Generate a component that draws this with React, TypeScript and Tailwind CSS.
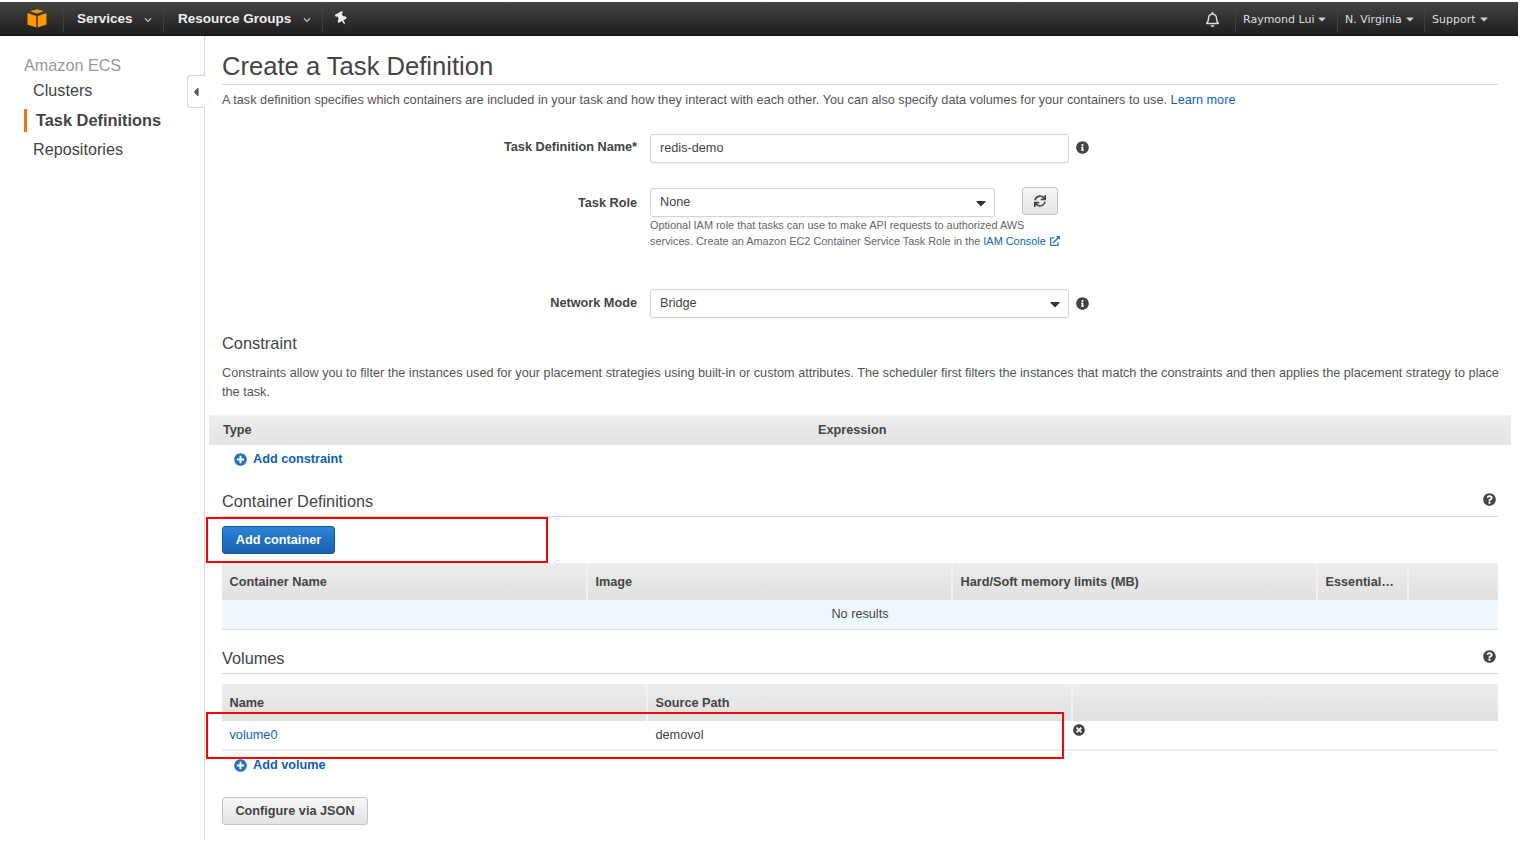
import React from "react";
import { FaInfoCircle, FaQuestionCircle, FaTimesCircle, FaPlusCircle, FaSync, FaThumbtack, FaRegBell, FaExternalLinkAlt, FaCaretDown, FaCaretLeft, FaChevronDown } from "react-icons/fa";

function Logo() {
  return (
    <svg width="20" height="19" viewBox="0 0 20 19" className="block">
      <path d="M0.5 4 L9.3 7 V18.5 L0.5 15.5 Z" fill="#f90" />
      <path d="M19.5 4 L10.7 7 V18.5 L19.5 15.5 Z" fill="#f90" />
      <path d="M3 2.2 L10 0.2 L17 2.2 L10 4.6 Z" fill="#f90" />
    </svg>
  );
}

function NavSep() {
  return <div className="w-px h-[26px] bg-[#3f3f3f]" />;
}

function TopNav() {
  return (
    <div className="mt-[2px] h-[34px] w-[1518px] flex items-center bg-gradient-to-b from-[#444444] to-[#1e1e1e] border-b border-[#141414] text-white">
      <div className="ml-[27px] w-[36px]"><Logo /></div>
      <NavSep />
      <div className="w-[13px]" />
      <span className="mt-[1px] text-[13.5px] font-bold text-[#eeeeee] w-[67px]">Services</span>
      <FaChevronDown className="mt-[2px] w-[8px] h-[8px] text-[#bbbbbb]" />
      <div className="w-[11px]" />
      <NavSep />
      <div className="w-[14px]" />
      <span className="mt-[1px] text-[13.5px] font-bold text-[#eeeeee] w-[125px] whitespace-nowrap">Resource Groups</span>
      <FaChevronDown className="mt-[2px] w-[8px] h-[8px] text-[#bbbbbb]" />
      <div className="w-[11px]" />
      <NavSep />
      <FaThumbtack className="ml-[12px] w-[13px] h-[13px] text-[#eeeeee] -rotate-30" />
      <div className="flex-1" />
      <FaRegBell className="mt-[1px] w-[15px] h-[15px] text-[#dddddd]" />
      <div className="w-[15px]" />
      <NavSep />
      <span className="ml-[7px] mt-[3px] font-['DejaVu_Sans'] text-[11px] text-[#dddddd] whitespace-nowrap w-[73px]">Raymond Lui</span>
      <FaCaretDown className="w-[12px] h-[12px] text-[#cccccc]" />
      <div className="w-[9px]" />
      <NavSep />
      <span className="ml-[7px] mt-[3px] font-['DejaVu_Sans'] text-[11px] text-[#dddddd] whitespace-nowrap w-[59px]">N. Virginia</span>
      <FaCaretDown className="w-[12px] h-[12px] text-[#cccccc]" />
      <div className="w-[8px]" />
      <NavSep />
      <span className="ml-[7px] mt-[3px] font-['DejaVu_Sans'] text-[11px] text-[#dddddd] whitespace-nowrap w-[46px]">Support</span>
      <FaCaretDown className="w-[12px] h-[12px] text-[#cccccc]" />
      <div className="w-[28px]" />
    </div>
  );
}

function Sidebar() {
  return (
    <div className="relative w-[205px] h-[804px] shrink-0 border-r border-[#d5d5d5] pt-[19px]">
      <div className="pl-[24px] text-[16.2px] leading-[20px] text-[#999999]">Amazon ECS</div>
      <div className="pl-[33px] mt-[5px] text-[16.2px] leading-[20px] text-[#444444]">Clusters</div>
      <div className="ml-[24px] mt-[9px] h-[23px] border-l-[3px] border-[#e47911] pl-[9px] text-[16.35px] leading-[23px] font-bold text-[#444444]">Task Definitions</div>
      <div className="pl-[33px] mt-[7px] text-[16.2px] leading-[20px] text-[#444444]">Repositories</div>
      <div className="absolute right-[-1px] top-[39px] w-[18px] h-[33px] bg-white border border-r-0 border-[#d5d5d5] rounded-l-[4px] flex items-center justify-center pr-[2px]">
        <FaCaretLeft className="w-[14px] h-[14px] text-[#555555]" />
      </div>
    </div>
  );
}

function Label({ children }: { children: React.ReactNode }) {
  return <div className="w-[415px] text-right text-[12.7px] font-bold text-[#444444] whitespace-nowrap">{children}</div>;
}

function Field({ width, text, caret }: { width: string; text: string; caret?: boolean }) {
  return (
    <div className={`${width} h-[29px] bg-white border border-[#d5d5d5] rounded-[3px] flex items-center justify-between pl-[9px] pr-[5px] text-[12.7px] text-[#444444] shadow-[0_1px_1px_rgba(0,0,0,0.05)]`}>
      <span className="mt-[1px]">{text}</span>
      {caret && <FaCaretDown className="w-[16px] h-[16px] text-[#333333]" />}
    </div>
  );
}

function Info() {
  return <FaInfoCircle className="w-[13px] h-[13px] text-[#444444]" />;
}

function HeaderCell({ children, className }: { children?: React.ReactNode; className: string }) {
  return <div className={`${className} h-full flex items-center pt-[1px] px-[7.5px] border-r-2 border-[#f2f2f2] text-[12.7px] font-bold text-[#444444] whitespace-nowrap`}>{children}</div>;
}

function SectionHead({ title }: { title: string }) {
  return (
    <div className="h-[27px] flex items-center justify-between border-b border-[#d5d5d5] text-[#444444]">
      <span className="text-[16.3px] leading-[20px] -mt-[4px]">{title}</span>
      <FaQuestionCircle className="mr-[2px] w-[13px] h-[13px] text-[#444444] -mt-[8px]" />
    </div>
  );
}

function AddLink({ children, className }: { children: React.ReactNode; className: string }) {
  return (
    <div className={`${className} ml-[12px] flex items-center gap-[6px] text-[12.7px] font-bold text-[#0f5fb5]`}>
      <FaPlusCircle className="w-[13px] h-[13px] text-[#2272c3]" />
      <span>{children}</span>
    </div>
  );
}

export default function App() {
  return (
    <div className="relative w-[1520px] h-[844px] overflow-hidden bg-white font-['Liberation_Sans',Arial,sans-serif]">
      <TopNav />
      <div className="flex">
        <Sidebar />
        <div className="flex-1 min-w-0 pl-[17px] pr-[22px]">
          <h1 className="mt-[15px] h-[34px] border-b border-[#d5d5d5] text-[25.6px] leading-[30px] text-[#444444] font-normal">Create a Task Definition</h1>
          <p className="mt-[7px] text-[12.7px] leading-[16px] text-[#555555] whitespace-nowrap">
            A task definition specifies which containers are included in your task and how they interact with each other. You can also specify data volumes for your containers to use. <span className="text-[#0f63b5]">Learn more</span>
          </p>

          <div className="mt-[26px] flex items-center gap-[13px]">
            <div className="-mt-[2px]"><Label>Task Definition Name*</Label></div>
            <Field width="w-[419px]" text="redis-demo" />
            <div className="-ml-[6px] -mt-[2px]"><Info /></div>
          </div>

          <div className="mt-[25px] flex items-start gap-[13px]">
            <div className="mt-[6px]"><Label>Task Role</Label></div>
            <div className="w-[420px]">
              <div className="flex items-start">
                <Field width="w-[345px]" text="None" caret />
                <div className="ml-[27px] -mt-[1px] w-[36px] h-[28px] rounded-[3px] border border-[#c4c4c4] bg-gradient-to-b from-[#f7f7f7] to-[#e4e4e4] flex items-center justify-center">
                  <FaSync className="w-[12px] h-[12px] text-[#444444]" />
                </div>
              </div>
              <p className="text-[10.9px] leading-[16px] text-[#666666] whitespace-nowrap">
                Optional IAM role that tasks can use to make API requests to authorized AWS<br />
                services. Create an Amazon EC2 Container Service Task Role in the <span className="text-[#0f63b5]">IAM Console</span>
                <FaExternalLinkAlt className="inline w-[10px] h-[10px] ml-[4px] text-[#2272c3] align-[-1px]" />
              </p>
            </div>
          </div>

          <div className="mt-[40px] flex items-center gap-[13px]">
            <div className="mt-[1px]"><Label>Network Mode</Label></div>
            <Field width="w-[419px]" text="Bridge" caret />
            <div className="-ml-[6px]"><Info /></div>
          </div>

          <h2 className="mt-[15px] text-[16.4px] leading-[20px] text-[#444444] font-normal">Constraint</h2>
          <p className="mt-[11px] -mr-[6px] text-[12.7px] leading-[19px] text-[#555555]">
            Constraints allow you to filter the instances used for your placement strategies using built-in or custom attributes. The scheduler first filters the instances that match the constraints and then applies the placement strategy to place the task.
          </p>

          <div className="mt-[13px] -mx-[13px] h-[30px] flex items-center bg-gradient-to-b from-[#ededed] to-[#e3e3e3] border-t border-[#f2f2f2] text-[12.7px] font-bold text-[#444444]">
            <span className="ml-[14px] w-[595px]">Type</span>
            <span>Expression</span>
          </div>
          <AddLink className="mt-[5px]">Add constraint</AddLink>

          <div className="mt-[21px]"><SectionHead title="Container Definitions" /></div>
          <button className="mt-[9px] block h-[28px] w-[113px] rounded-[3px] border border-[#125a9e] bg-gradient-to-b from-[#2b83d7] to-[#1562b0] text-[12.7px] font-bold text-white">Add container</button>

          <div className="mt-[9px] h-[37px] flex bg-gradient-to-b from-[#ededed] to-[#e1e1e1]">
            <HeaderCell className="w-[366px]">Container Name</HeaderCell>
            <HeaderCell className="w-[365px]">Image</HeaderCell>
            <HeaderCell className="w-[365px]">Hard/Soft memory limits (MB)</HeaderCell>
            <HeaderCell className="w-[91px]">Essential…</HeaderCell>
            <div className="flex-1" />
          </div>
          <div className="h-[30px] flex items-center justify-center bg-[#f0f7fe] border-b border-[#dddddd] text-[12.7px] text-[#444444]">No results</div>

          <div className="mt-[17px]"><SectionHead title="Volumes" /></div>
          <div className="mt-[10px] h-[37px] flex bg-gradient-to-b from-[#ededed] to-[#e1e1e1]">
            <HeaderCell className="w-[426px]">Name</HeaderCell>
            <HeaderCell className="w-[425px]">Source Path</HeaderCell>
            <div className="flex-1" />
          </div>
          <div className="h-[30px] flex border-b-2 border-[#eeeeee] text-[12.7px] text-[#444444]">
            <div className="w-[426px] px-[7.5px] leading-[28px] text-[#0f63b5]">volume0</div>
            <div className="w-[425px] px-[7.5px] leading-[28px]">demovol</div>
            <FaTimesCircle className="w-[12px] h-[12px] mt-[3px] text-[#444444]" />
          </div>
          <AddLink className="mt-[5px]">Add volume</AddLink>
          <button className="mt-[22px] block h-[28px] w-[146px] rounded-[3px] border border-[#c4c4c4] bg-gradient-to-b from-[#f7f7f7] to-[#e4e4e4] text-[12.7px] font-bold text-[#444444]">Configure via JSON</button>
        </div>
      </div>
      <div className="absolute left-[206px] top-[517px] w-[342px] h-[46px] border-2 border-[#ff0000]" />
      <div className="absolute left-[206px] top-[712px] w-[858px] h-[47px] border-2 border-[#ff0000]" />
    </div>
  );
}
